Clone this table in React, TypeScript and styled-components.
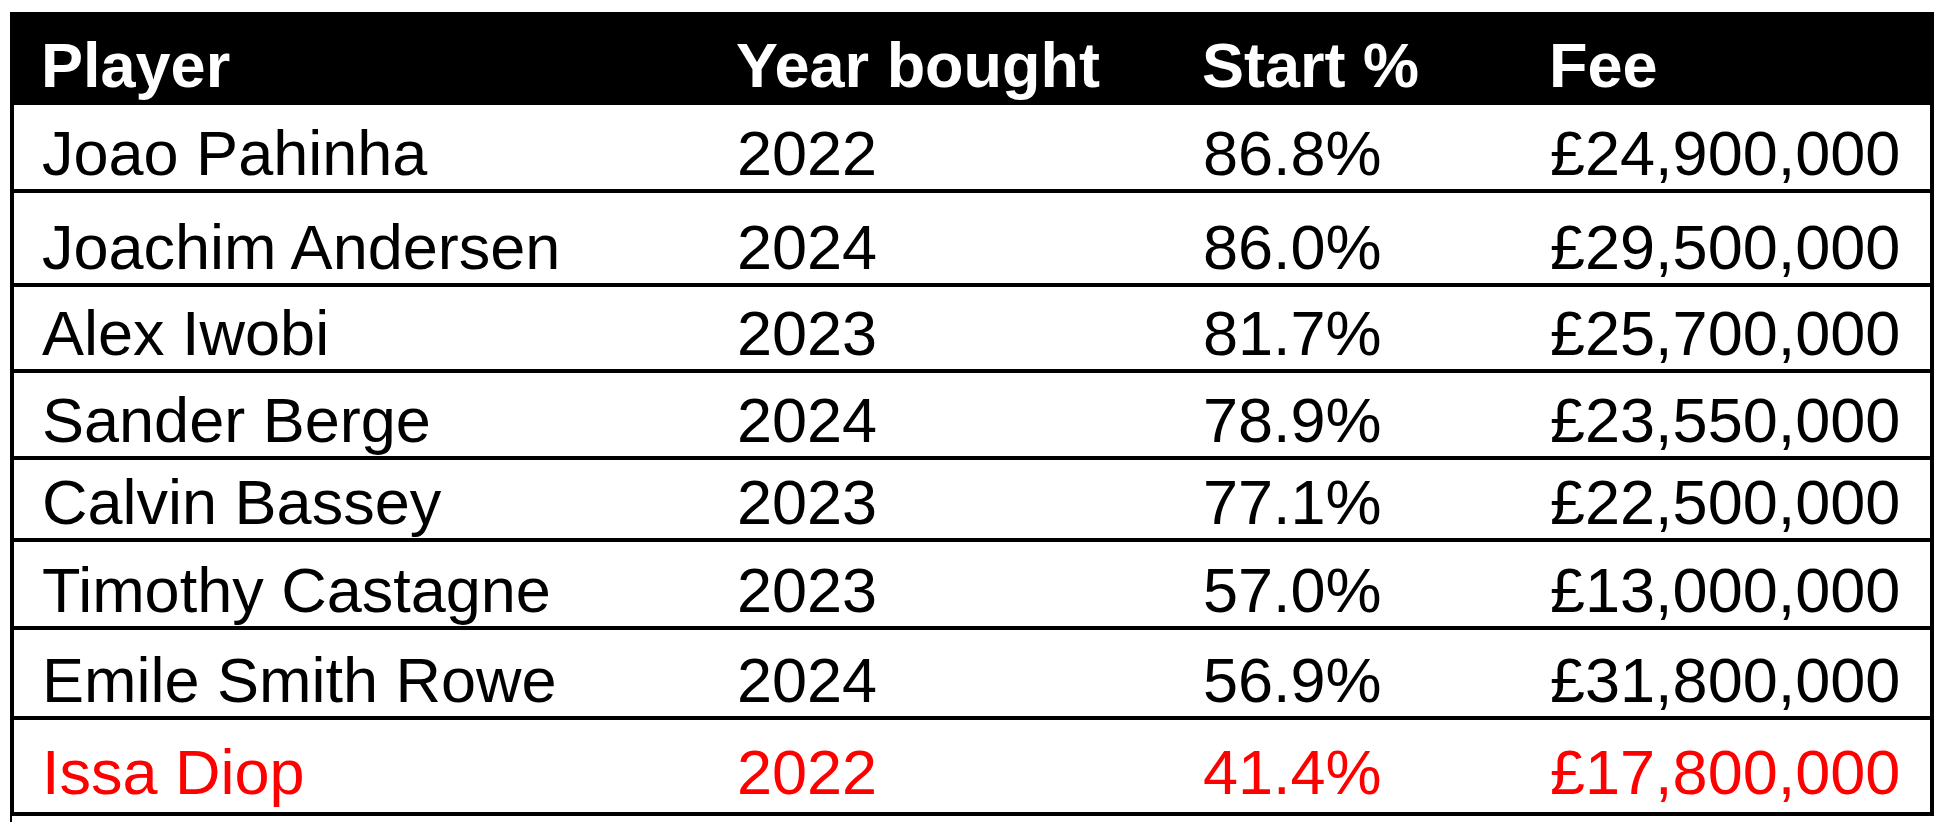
import * as React from 'react'
import styled, { createGlobalStyle } from 'styled-components'

const GlobalStyle = createGlobalStyle`
	html, body {
		margin: 0;
		padding: 0;
		background: #fff;
	}
	body {
		font-family: 'Liberation Sans', Arial, sans-serif;
	}
`

type Transfer = {
	player: string
	year: string
	start: string
	fee: string
	height: number
	flagged?: boolean
}

const transfers: Transfer[] = [
	{ player: 'Joao Pahinha', year: '2022', start: '86.8%', fee: '£24,900,000', height: 84 },
	{ player: 'Joachim Andersen', year: '2024', start: '86.0%', fee: '£29,500,000', height: 90 },
	{ player: 'Alex Iwobi', year: '2023', start: '81.7%', fee: '£25,700,000', height: 82 },
	{ player: 'Sander Berge', year: '2024', start: '78.9%', fee: '£23,550,000', height: 83 },
	{ player: 'Calvin Bassey', year: '2023', start: '77.1%', fee: '£22,500,000', height: 78 },
	{ player: 'Timothy Castagne', year: '2023', start: '57.0%', fee: '£13,000,000', height: 84 },
	{ player: 'Emile Smith Rowe', year: '2024', start: '56.9%', fee: '£31,800,000', height: 86 },
	{ player: 'Issa Diop', year: '2022', start: '41.4%', fee: '£17,800,000', height: 92, flagged: true },
]

const columns = ['Player', 'Year bought', 'Start %', 'Fee']

export default function App() {
	return (
		<>
			<GlobalStyle />
			<Page>
				<Table>
					<HeadRow>
						{columns.map(c => (
							<HeadCell key={c}>{c}</HeadCell>
						))}
					</HeadRow>
					{transfers.map(t => (
						<Row key={t.player} $height={t.height} $flagged={t.flagged}>
							<Cell $lift={t.flagged ? 4 : 0}>{t.player}</Cell>
							<Cell $lift={t.flagged ? 4 : 0}>{t.year}</Cell>
							<Cell $lift={t.flagged ? 4 : 0}>{t.start}</Cell>
							<Cell $lift={t.flagged ? 4 : 0}>{t.fee}</Cell>
						</Row>
					))}
					<Tail />
				</Table>
			</Page>
		</>
	)
}

const Page = styled.div`
	padding: 12px 0 0 10px;
	width: 1944px;
	height: 822px;
	box-sizing: border-box;
	overflow: hidden;
`

const Table = styled.div`
	width: 1924px;
	display: flex;
	flex-direction: column;
`

const gridCols = `695px 466px 347px 1fr`

const HeadRow = styled.div`
	display: grid;
	grid-template-columns: ${gridCols};
	background: #000;
	color: #fff;
	height: 93px;
	padding: 0 4px;
`

const HeadCell = styled.div`
	display: flex;
	align-items: flex-end;
	padding: 0 0 4px 27px;
	font-size: 63px;
	font-weight: 700;
	line-height: 72px;
	white-space: nowrap;
`

const Row = styled.div<{ $height: number; $flagged?: boolean }>`
	display: grid;
	grid-template-columns: ${gridCols};
	height: ${p => p.$height}px;
	border-left: 4px solid #000;
	border-right: 4px solid #000;
	border-bottom: 4px solid #000;
	color: ${p => (p.$flagged ? '#ff0000' : '#000')};
`

const Cell = styled.div<{ $lift: number }>`
	display: flex;
	align-items: flex-end;
	padding: 0 0 ${p => p.$lift}px 28px;
	font-size: 63px;
	line-height: 72px;
	white-space: nowrap;
`

const Tail = styled.div`
	height: 20px;
	border-left: 2px solid #000;
`
